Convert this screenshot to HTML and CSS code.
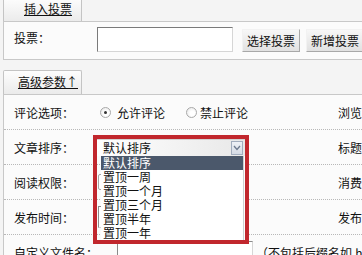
FILE: index.html
```html
<!DOCTYPE html>
<html lang="zh-CN">
<head>
<meta charset="UTF-8">
<meta name="viewport" content="width=device-width, initial-scale=1.0">
<title>发布文章 - 高级参数</title>
<link rel="stylesheet" href="styles.css">
</head>
<body>

<div class="wrap">
  <div class="tab first"><a href="#">插入投票</a></div>
  <div class="panel vote">
    <span class="label">投票：</span>
    <input type="text" class="text-box">
    <button class="btn pick">选择投票</button>
    <button class="btn">新增投票</button>
  </div>

  <div class="tab"><a href="#">高级参数↑</a></div>
  <div class="panel adv">
    <div class="row">
      <span class="label">评论选项：</span>
      <div class="field">
        <span class="radio checked"></span><span class="opt">允许评论</span>
        <span class="radio second"></span><span class="opt">禁止评论</span>
      </div>
      <span class="side">浏览</span>
    </div>

    <div class="row">
      <span class="label">文章排序：</span>
      <div class="field">
        <div class="sort">
          <div class="select">
            <span>默认排序</span>
            <span class="drop">
              <svg width="8" height="6" viewBox="0 0 8 6"><polyline points="1,1 4,4.5 7,1" fill="none" stroke="#6d7a8e" stroke-width="1.3"/></svg>
            </span>
          </div>
          <ul class="options">
            <li class="active">默认排序</li>
            <li>置顶一周</li>
            <li>置顶一个月</li>
            <li>置顶三个月</li>
            <li>置顶半年</li>
            <li>置顶一年</li>
          </ul>
          <div class="mark"></div>
        </div>
      </div>
      <span class="side">标题</span>
    </div>

    <div class="row">
      <span class="label">阅读权限：</span>
      <div class="field">
        <div class="small-select"></div>
      </div>
      <span class="side">消费</span>
    </div>

    <div class="row">
      <span class="label">发布时间：</span>
      <div class="field">
        <input type="text" class="time-box">
      </div>
      <span class="side">发布</span>
    </div>

    <div class="row">
      <span class="label wide">自定义文件名：</span>
      <input type="text" class="name-box">
      <span class="hint">（不包括后缀名如.html）</span>
    </div>
  </div>
</div>

</body>
</html>
```

FILE: styles.css
```css
body {
  margin: 0;
  background: #f4f4f4;
  font-family: "Noto Sans CJK SC", sans-serif;
  font-size: 12px;
  color: #111;
  overflow: hidden;
}
.wrap {
  padding-left: 3px;
  white-space: nowrap;
}
.tab {
  width: 79px;
  height: 24px;
  box-sizing: border-box;
  margin-top: 10px;
  padding-left: 11px;
  border: 1px solid #c4c4c4;
  border-bottom: none;
  border-radius: 2px 2px 0 0;
  background: linear-gradient(#fdfdfd, #ebebeb);
  text-align: center;
  line-height: 22px;
}
.tab.first {
  margin-top: -3px;
}
.tab a {
  color: #111;
  text-decoration: underline;
}
.panel {
  border-top: 1px solid #c8c8c8;
  border-left: 1px solid #c8c8c8;
  background: #fbfbfb;
}
.vote {
  display: flex;
  align-items: flex-end;
  height: 39px;
  box-sizing: border-box;
  padding: 0 0 7px 10px;
  border-bottom: 1px solid #c8c8c8;
}
.vote .label {
  align-self: center;
  width: 83px;
}
.text-box {
  width: 136px;
  height: 25px;
  box-sizing: border-box;
  margin: 0;
  border: 1px solid;
  border-color: #7a7a7a #d6d6d6 #d6d6d6 #7a7a7a;
  background: #fff;
}
.btn {
  height: 23px;
  margin: 0 0 0 6px;
  padding: 0 4px;
  border: 1px solid;
  border-color: #f2f2f2 #a8a8a8 #a8a8a8 #f2f2f2;
  background: linear-gradient(#f7f7f7, #e1e1e1);
  font-family: "Noto Sans CJK SC", sans-serif;
  font-size: 12px;
  color: #111;
}
.btn.pick {
  margin-left: 9px;
}
.row {
  display: flex;
  align-items: center;
  height: 35px;
  box-sizing: border-box;
  padding-left: 10px;
  border-bottom: 1px dotted #b8b8b8;
}
.label {
  flex: none;
  width: 83px;
}
.label.wide {
  width: 103px;
}
.field {
  flex: none;
  display: flex;
  align-items: center;
  width: 241px;
}
.side {
  flex: none;
}
.radio {
  width: 11px;
  height: 11px;
  box-sizing: border-box;
  margin-left: 3px;
  border: 1px solid #a9a9a9;
  border-radius: 50%;
  background: radial-gradient(circle at 60% 60%, #fff 30%, #e2e2e2);
  position: relative;
}
.radio.checked::after {
  content: '';
  position: absolute;
  top: 3px;
  left: 3px;
  width: 3px;
  height: 3px;
  border-radius: 50%;
  background: #333;
}
.radio.second {
  margin-left: 21px;
}
.opt {
  margin-left: 3px;
}
.radio.checked + .opt {
  margin-left: 6px;
}
.sort {
  position: relative;
  z-index: 2;
  width: 148px;
}
.select {
  display: flex;
  align-items: center;
  justify-content: space-between;
  height: 17px;
  box-sizing: border-box;
  padding: 0 2px 0 6px;
  border-top: 1px solid #d2d2d2;
  background: linear-gradient(to right, #fff, #e8e8e8);
  line-height: 15px;
}
.drop {
  display: flex;
  align-items: center;
  justify-content: center;
  width: 12px;
  height: 14px;
  box-sizing: border-box;
  border: 1px solid #a2adbe;
  background: linear-gradient(#eef1f6, #d5dbe5);
}
.options {
  position: absolute;
  top: 17px;
  left: 4px;
  width: 142px;
  margin: 0;
  padding: 0;
  list-style: none;
  background: #fff;
  border-right: 1px solid #cfcfcf;
}
.options li {
  height: 14px;
  padding-left: 2px;
  font-size: 12px;
  line-height: 14px;
}
.options li.active {
  background: #4b586b;
  color: #fff;
}
.mark {
  position: absolute;
  top: -4px;
  left: -4px;
  width: 156px;
  height: 109px;
  box-sizing: border-box;
  border: 4px solid #c1272d;
}
.small-select {
  width: 110px;
  height: 16px;
  box-sizing: border-box;
  margin-left: 1px;
  border: 1px solid #a5a5a5;
  border-radius: 2px;
  background: #fff;
}
.time-box {
  width: 120px;
  height: 22px;
  box-sizing: border-box;
  margin: 0 0 0 1px;
  border: 1px solid;
  border-color: #8a8a8a #d6d6d6 #d6d6d6 #8a8a8a;
  background: #fff;
}
.name-box {
  flex: none;
  width: 136px;
  height: 22px;
  box-sizing: border-box;
  margin: 0;
  border: 1px solid;
  border-color: #8a8a8a #d6d6d6 #d6d6d6 #8a8a8a;
  background: #fff;
}
.hint {
  margin-left: 3px;
}
```
